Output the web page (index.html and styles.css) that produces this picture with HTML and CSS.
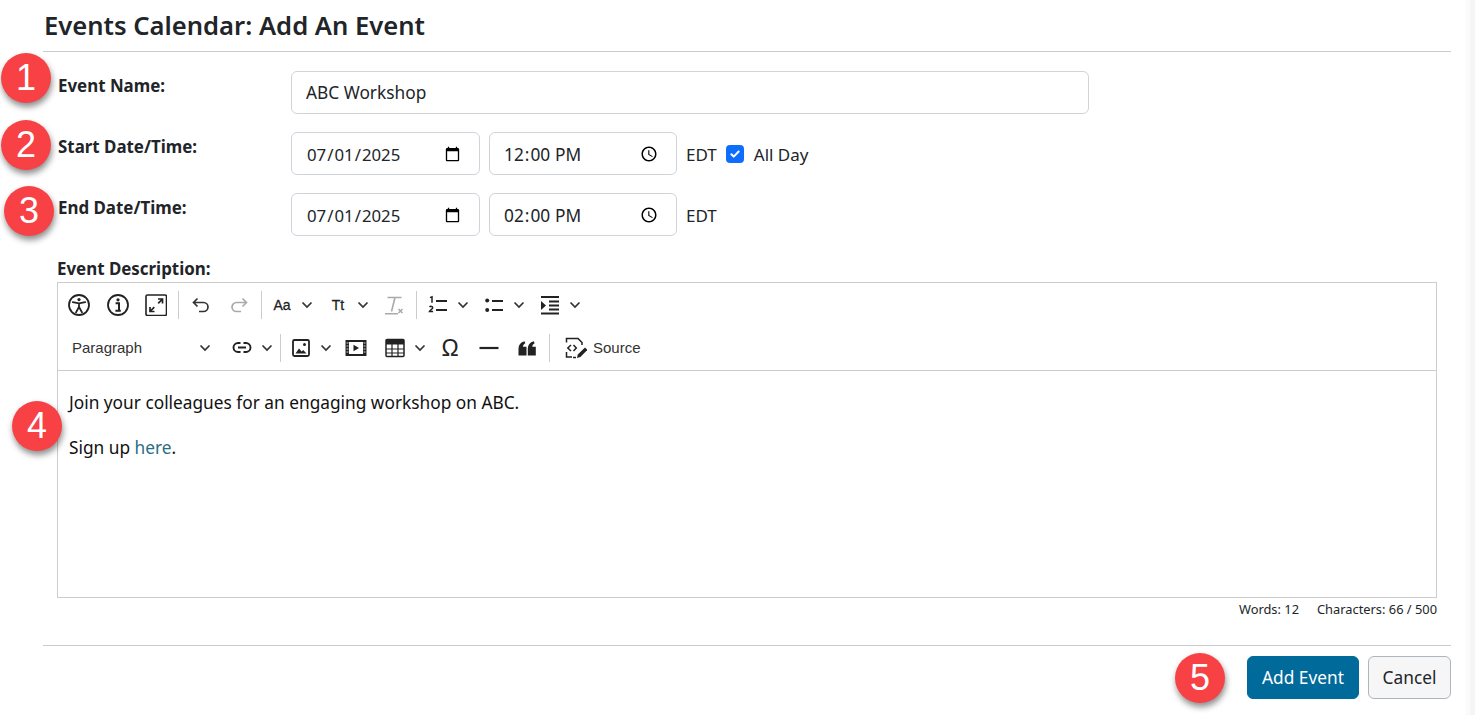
FILE: index.html
```html
<!DOCTYPE html>
<html lang="en">
<head>
<meta charset="utf-8">
<title>Events Calendar: Add An Event</title>
<link rel="stylesheet" href="styles.css">
</head>
<body>
<main class="page">
  <h1 class="title">Events Calendar: Add An Event</h1>
  <form class="form">
    <div class="row">
      <label class="label" for="name">Event Name:</label>
      <input class="field field-name" id="name" type="text" value="ABC Workshop">
    </div>
    <div class="row">
      <label class="label" for="sd">Start Date/Time:</label>
      <input class="field field-date" id="sd" type="date" value="2025-07-01">
      <input class="field field-time" type="time" value="12:00">
      <span class="tz">EDT</span>
      <span class="check"><svg viewBox="0 0 18 18" width="12" height="12"><path d="M3.500 9.500l3.600 3.400 7.400-7.600" fill="none" stroke="#fff" stroke-width="3" stroke-linecap="round" stroke-linejoin="round"/></svg></span>
      <span class="allday">All Day</span>
    </div>
    <div class="row">
      <label class="label" for="ed">End Date/Time:</label>
      <input class="field field-date" id="ed" type="date" value="2025-07-01">
      <input class="field field-time" type="time" value="14:00">
      <span class="tz">EDT</span>
    </div>

    <div class="desc">
      <div class="desc-label">Event Description:</div>
      <div class="editor">
        <div class="toolbar">
          <div class="tb-row">
            <span class="btn"><svg class="ic22" viewBox="0 0 22 22"><circle cx="11" cy="11" r="10" fill="none" stroke="#222" stroke-width="1.800"/><circle cx="11" cy="5.600" r="1.600" fill="#222"/><path d="M4.800 8.200l6.200 1.200 6.200-1.200M11 9.400v3.600M11 13l-3 5.400M11 13l3 5.400" fill="none" stroke="#222" stroke-width="1.800" stroke-linecap="round"/></svg></span>
            <span class="btn btn-next"><svg class="ic22" viewBox="0 0 22 22"><circle cx="11" cy="11" r="10" fill="none" stroke="#222" stroke-width="1.800"/><circle cx="11" cy="5.800" r="1.600" fill="#222"/><path d="M8.600 9.200h3.400v7.200M8.400 16.800h5.400" fill="none" stroke="#222" stroke-width="2"/></svg></span>
            <span class="btn"><svg class="ic22" viewBox="0 0 22 22"><rect x="1" y="1" width="20.500" height="20.500" rx="1.500" fill="none" stroke="#222" stroke-width="1.600"/><path d="M13 5h4.500v4.500M17 5.500l-3.800 3.800M9.500 17.500H5V13M5.500 17l3.800-3.800" fill="none" stroke="#222" stroke-width="1.700"/></svg></span>
            <span class="sep"></span>
            <span class="btn"><svg class="ic20" viewBox="0 0 20 20"><path d="M6.500 3.500L2.500 7.500l4 4M3 7.500h9.500a4.500 4.500 0 0 1 0 9H8" fill="none" stroke="#333" stroke-width="1.700"/></svg></span>
            <span class="btn"><svg class="ic20" viewBox="0 0 20 20"><path d="M13.500 3.500l4 4-4 4M17 7.500H7.500a4.500 4.500 0 0 0 0 9H12" fill="none" stroke="#aaa" stroke-width="1.700"/></svg></span>
            <span class="sep sep-tight"></span>
            <span class="drop"><span class="tx-ic">Aa</span><svg class="chev" viewBox="0 0 12 8"><path d="M1.500 1.500L6 6l4.500-4.500" fill="none" stroke="#333" stroke-width="1.700"/></svg></span>
            <span class="drop"><span class="tx-ic">Tt</span><svg class="chev" viewBox="0 0 12 8"><path d="M1.500 1.500L6 6l4.500-4.500" fill="none" stroke="#333" stroke-width="1.700"/></svg></span>
            <span class="btn btn-tx"><svg class="ic20" viewBox="0 0 20 20"><path d="M3.500 2.500h14M11 2.500L7.500 16.500M1 18.800h13M14.500 14l4 4M18.500 14l-4 4" fill="none" stroke="#aaa" stroke-width="1.600"/></svg></span>
            <span class="sep"></span>
            <span class="drop"><svg class="ic20" viewBox="0 0 20 20"><path d="M8 6h11M8 15h11" stroke="#222" stroke-width="1.900"/><path d="M2 2.600l2-.8v6M1.600 12.200c.8-1.400 3.400-1 3 .8-.2 1-2 1.800-3 3.400h3.500" fill="none" stroke="#222" stroke-width="1.500"/></svg><svg class="chev" viewBox="0 0 12 8"><path d="M1.500 1.500L6 6l4.500-4.500" fill="none" stroke="#333" stroke-width="1.700"/></svg></span>
            <span class="drop"><svg class="ic20" viewBox="0 0 20 20"><circle cx="3.200" cy="5.500" r="2" fill="#222"/><circle cx="3.200" cy="15" r="2" fill="#222"/><path d="M8 6h11M8 15h11" stroke="#222" stroke-width="1.900"/></svg><svg class="chev" viewBox="0 0 12 8"><path d="M1.500 1.500L6 6l4.500-4.500" fill="none" stroke="#333" stroke-width="1.700"/></svg></span>
            <span class="drop"><svg class="ic20" viewBox="0 0 20 20"><path d="M1 2h18M9 6.500h10M9 10.500h10M9 14.500h10M1 18.500h18" stroke="#222" stroke-width="1.800"/><path d="M1 6l5 4.500L1 15z" fill="#222"/></svg><svg class="chev" viewBox="0 0 12 8"><path d="M1.500 1.500L6 6l4.500-4.500" fill="none" stroke="#333" stroke-width="1.700"/></svg></span>
          </div>
          <div class="tb-row">
            <span class="para"><span>Paragraph</span><svg class="chev" viewBox="0 0 12 8"><path d="M1.500 1.500L6 6l4.500-4.500" fill="none" stroke="#333" stroke-width="1.700"/></svg></span>
            <span class="drop"><svg class="ic20" viewBox="0 0 20 20"><path d="M8.500 5H6a4.500 4.500 0 0 0 0 9h2.500M11.500 5H14a4.500 4.500 0 0 1 0 9h-2.500M6 9.500h8" fill="none" stroke="#222" stroke-width="1.900"/></svg><svg class="chev" viewBox="0 0 12 8"><path d="M1.500 1.500L6 6l4.500-4.500" fill="none" stroke="#333" stroke-width="1.700"/></svg></span>
            <span class="sep sep-after-link"></span>
            <span class="drop"><svg class="ic20" viewBox="0 0 20 20"><rect x="2" y="2" width="16" height="16" rx="1.500" fill="none" stroke="#222" stroke-width="1.800"/><circle cx="13.500" cy="6.500" r="1.500" fill="#222"/><path d="M4.500 15.500l3.500-5 2.700 3 1.500-1.500 3.300 3.500z" fill="#222"/></svg><svg class="chev" viewBox="0 0 12 8"><path d="M1.500 1.500L6 6l4.500-4.500" fill="none" stroke="#333" stroke-width="1.700"/></svg></span>
            <span class="btn btn-media"><svg class="ic22" viewBox="0 0 22 20"><rect x="0.500" y="2" width="21" height="16" fill="#222"/><rect x="4" y="4" width="14" height="12" fill="#fff"/><path d="M8.500 6.800v6.400l5.500-3.200z" fill="#222"/><path d="M1.500 5h2M1.500 8h2M1.500 11h2M1.500 14h2M18.500 5h2M18.500 8h2M18.500 11h2M18.500 14h2" stroke="#fff" stroke-width=".8"/></svg></span>
            <span class="drop"><svg class="ic20" viewBox="0 0 20 20"><rect x="1" y="1.500" width="18" height="17" rx="1" fill="#fff" stroke="#222" stroke-width="1.500"/><path d="M1 1.500h18v5H1z" fill="#222"/><path d="M1 11h18M1 15h18M7 6v12M13 6v12" stroke="#222" stroke-width="1.200"/></svg><svg class="chev" viewBox="0 0 12 8"><path d="M1.500 1.500L6 6l4.500-4.500" fill="none" stroke="#333" stroke-width="1.700"/></svg></span>
            <span class="btn btn-omega"><span class="omega">Ω</span></span>
            <span class="btn btn-next"><svg class="ic20" viewBox="0 0 20 20"><path d="M0.500 10h19" stroke="#222" stroke-width="2.200"/></svg></span>
            <span class="btn"><svg class="ic20" viewBox="0 0 20 20"><path d="M1.500 17.500V10.500C1.500 7 3.500 4.300 7.500 3.200l.8 2C6.800 6 6 7.100 6 8.800h3.500v8.700zM10.800 17.500V10.500c0-3.500 2-6.200 6-7.300l.8 2c-1.500.8-2.300 1.900-2.300 3.600h3.500v8.700z" fill="#222"/></svg></span>
            <span class="sep"></span>
            <span class="source"><svg class="ic22" viewBox="0 0 22 22"><path d="M7 1.500H1.500v4M1.500 15v5H7M7 1.500h6l4 4v2.500M11 20.500H8" fill="none" stroke="#222" stroke-width="1.500"/><path d="M6 8L2.800 11 6 14M8.500 8l2.800 3-2.800 3" fill="none" stroke="#222" stroke-width="1.500"/><path d="M12 21l.8-3.600 7.200-7 2.400 2.400-7 7.200z" fill="#222"/></svg><span>Source</span></span>
          </div>
        </div>
        <div class="content">
          <p class="para-text">Join your colleagues for an engaging workshop on ABC.</p>
          <p class="para-text">Sign up <a class="link" href="#">here</a>.</p>
        </div>
      </div>
      <div class="counts"><span>Words: 12</span><span>Characters: 66 / 500</span></div>
    </div>

    <div class="actions">
      <button class="action primary" type="button">Add Event</button>
      <button class="action secondary" type="button">Cancel</button>
    </div>
  </form>

  <span class="badge b1">1</span>
  <span class="badge b2">2</span>
  <span class="badge b3">3</span>
  <span class="badge b4">4</span>
  <span class="badge b5">5</span>
</main>
<div class="strip"></div>
</body>
</html>
```

FILE: styles.css
```css
html, body { margin: 0; height: 100%; background: #fff; overflow: hidden; }
body { display: flex; font-family: "Noto Sans", "Open Sans", sans-serif; color: #212529; font-size: 17.300px; }
.page { position: relative; flex: 1; padding: 0 15px 0 43px; min-width: 0; }
.strip { width: 5px; background: #f4f5f6; border-left: 4px solid #fbfbfb; }

.title { margin: 0; height: 52px; box-sizing: border-box; padding: 9px 0 0 1px; font-size: 25.600px; line-height: 34px; font-weight: 600; border-bottom: 1px solid #c9ccd0; }
.form { padding-top: 19px; }
.row { display: flex; align-items: center; margin: 0 0 18px 15px; height: 43px; }
.label { width: 233px; flex: none; align-self: flex-start; padding-top: 3px; font-weight: 700; font-size: 16.900px; line-height: 24px; }

.field { box-sizing: border-box; height: 43px; padding: 0 14px; border: 1px solid #ced4da; border-radius: 6px; font: inherit; color: #212529; background: #fff; }
.field-name { width: 798px; }
.field-date { width: 189px; margin-right: 9px; padding: 2px 16px 0 14px; font-size: 16.800px; }
.field-time { width: 188px; margin-right: 9px; padding: 2px 15px 0 13px; }
.tz { font-size: 17px; padding-top: 2px; }
.allday { font-size: 17px; padding-top: 2px; }
.check { width: 18px; height: 18px; margin: 0 10px 0 9px; border-radius: 4px; background: #0d6efd; display: flex; align-items: center; justify-content: center; }

.desc { margin: 23px 14px 0 14px; }
.desc-label { font-weight: 700; font-size: 16.900px; line-height: 20px; height: 23px; }
.editor { border: 1px solid #ccc; height: 316px; box-sizing: border-box; display: flex; flex-direction: column; }
.toolbar { height: 87px; flex: none; border-bottom: 1px solid #ccc; padding-left: 2px; }
.tb-row { display: flex; align-items: center; height: 43px; }
.btn, .drop, .para, .source { display: flex; align-items: center; flex: none; height: 34px; }
.btn { width: 38px; justify-content: center; }
.btn-next { margin-left: 1px; }
.btn-tx { margin-left: -1px; }
.btn-media { margin: 0 2px 0 -2px; }
.btn-omega { margin-left: -2px; }
.drop { width: 56px; padding-left: 8px; box-sizing: border-box; }
.para { width: 164px; padding: 0 9px 0 12px; box-sizing: border-box; justify-content: space-between; font-family: "Liberation Sans", sans-serif; font-size: 15px; color: #333; }
.para .chev { margin-left: 0; margin-right: 4px; }
.source { padding-left: 12px; font-family: "Liberation Sans", sans-serif; font-size: 15px; color: #333; }
.source span { margin-left: 6px; }
.ic22 { width: 22px; height: 22px; flex: none; }
.ic20 { width: 20px; height: 20px; flex: none; }
.chev { width: 12px; height: 8px; flex: none; margin-left: 9px; }
.tx-ic { width: 20px; text-align: center; font-family: "Liberation Sans", sans-serif; font-size: 14px; color: #222; -webkit-text-stroke: .3px #222; }
.omega { font-family: "Liberation Sans", sans-serif; font-size: 23px; line-height: 22px; color: #222; }
.sep { width: 1px; height: 28px; background: #ccc; margin: 0 3px; flex: none; }
.sep-tight { margin-right: 2px; }
.sep-after-link { margin: 0 2px 0 0; }

.content { padding: 20px 11px 0; }
.para-text { margin: 0 0 21px; font-size: 17.300px; line-height: 24px; color: #111; }
.link { color: #2a6e85; text-decoration: none; }
.counts { display: flex; justify-content: flex-end; gap: 18px; margin-top: 3px; font-size: 12.850px; line-height: 16px; }

.actions { margin-top: 28px; padding-top: 10px; border-top: 1px solid #c9ccd0; display: flex; justify-content: flex-end; gap: 9px; }
.action { height: 43px; border-radius: 6px; font: inherit; padding: 0; }
.primary { width: 112px; background: #006a9b; border: 1px solid #006a9b; color: #fff; }
.secondary { width: 83px; background: #f6f6f7; border: 1px solid #adb5bd; color: #212529; }

.badge { position: absolute; width: 50px; height: 50px; border-radius: 50%; background: #f74145; color: #fff; display: flex; align-items: center; justify-content: center; font-family: "Liberation Sans", sans-serif; font-size: 36px; box-shadow: 1px 4px 6px rgba(0,0,0,.45); }
.b1 { left: 1px; top: 53px; }
.b2 { left: 1px; top: 120px; }
.b3 { left: 4px; top: 186px; }
.b4 { left: 12px; top: 401px; }
.b5 { left: 1175px; top: 653px; }
```
